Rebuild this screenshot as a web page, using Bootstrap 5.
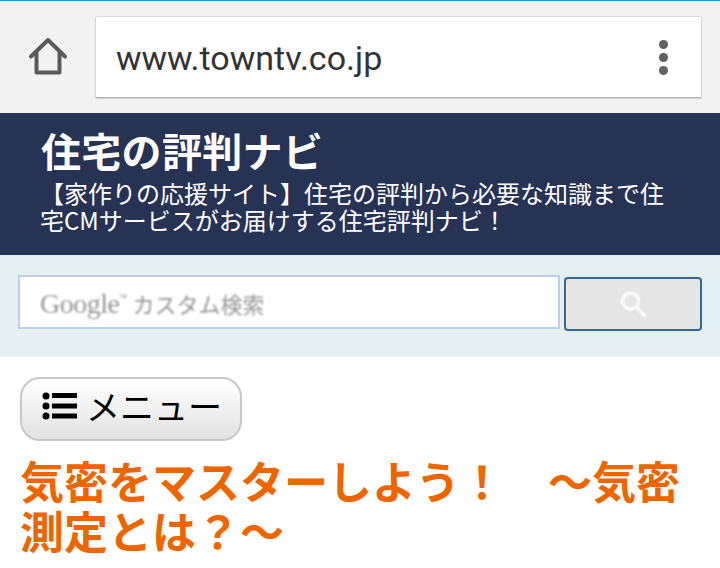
<!DOCTYPE html>
<html lang="ja">
<head>
  <meta charset="UTF-8" />
  <meta name="viewport" content="width=device-width, initial-scale=1" />
  <title>住宅の評判ナビ</title>
  <link href="https://cdn.jsdelivr.net/npm/bootstrap@5.3.0/dist/css/bootstrap.min.css" rel="stylesheet" />
  <style>
    html, body {
      height: 568px;
      overflow: hidden;
    }
    body {
      background: #fff;
      font-family: "Noto Sans CJK JP", "Liberation Sans", sans-serif;
    }
    .browser-bar {
      height: 113px;
      background: #f2f2f2;
      border-top: 1px solid #2f8fc4;
      padding: 15px 18px 0 28px;
    }
    .home-icon {
      width: 40px;
      height: 40px;
      margin-right: 27px;
      margin-top: 21px;
    }
    .url-box {
      height: 82px;
      background: #fff;
      border: 1px solid #d8d8d8;
      border-bottom: 1px solid #b4b4b4;
      border-radius: 2px;
      box-shadow: 0 1px 1px rgba(0,0,0,.15);
      padding: 3px 33px 0 20px;
      font-family: "Roboto", "Liberation Sans", sans-serif;
      font-size: 34px;
      color: #333;
    }
    .dots {
      margin-top: -3px;
    }
    .dots span {
      display: block;
      width: 9px;
      height: 9px;
      border-radius: 50%;
      background: #606060;
    }
    .site-head {
      height: 142px;
      background: #263354;
      color: #fff;
      padding: 11px 41px 0;
    }
    .site-title {
      font-size: 40px;
      font-weight: 700;
      line-height: 52px;
      letter-spacing: .3px;
      margin: 0;
    }
    .site-desc {
      font-size: 24px;
      line-height: 27px;
      margin: 3px 0 0 -1px;
      width: 640px;
    }
    .search-strip {
      height: 102px;
      background: #e5f0f3;
      padding: 20px 18px 0 18px;
    }
    .search-field {
      width: 542px;
      height: 54px;
      background: #fff;
      border: 2px solid #bdd0e8;
      padding: 3px 0 0 20px;
      font-size: 22px;
      color: #959595;
    }
    .search-field > span {
      filter: blur(.8px);
    }
    .search-logo {
      font-family: "Liberation Serif", serif;
      font-size: 28px;
      letter-spacing: -.5px;
    }
    .search-field sup {
      font-size: 10px;
      top: -1.1em;
      margin-right: 6px;
    }
    .search-go {
      width: 138px;
      height: 54px;
      margin: 2px 0 0 4px;
      background: #e6e6e6;
      border: 2px solid #336699;
      border-radius: 4px;
    }
    .page-main {
      padding: 20px 20px 0;
    }
    .menu-btn {
      width: 222px;
      height: 64px;
      border: 2px solid #c8c8c8;
      border-radius: 20px;
      background: linear-gradient(to bottom, #fff, #e2e2e2);
      color: #000;
      font-size: 34px;
      line-height: 1;
      padding: 0 0 6px 20px;
    }
    .article-title {
      margin: 14px 0 0;
      width: 680px;
      color: #ee6500;
      font-size: 44px;
      font-weight: 700;
      line-height: 50px;
    }
  </style>
</head>
<body>
  <div class="browser-bar d-flex align-items-start">
    <svg class="home-icon flex-shrink-0" viewBox="0 0 40 40" fill="none" stroke="#5a5a5a" stroke-width="4" stroke-linejoin="round" stroke-linecap="round">
      <path d="M3 19.500 20 3 37 19.500M8.500 15V35.500H31.500V15" />
    </svg>
    <div class="url-box flex-grow-1 d-flex align-items-center justify-content-between">
      <span>www.towntv.co.jp</span>
      <div class="dots d-flex flex-column gap-1">
        <span></span><span></span><span></span>
      </div>
    </div>
  </div>

  <header class="site-head">
    <h1 class="site-title">住宅の評判ナビ</h1>
    <p class="site-desc">【家作りの応援サイト】住宅の評判から必要な知識まで住宅CMサービスがお届けする住宅評判ナビ！</p>
  </header>

  <form class="search-strip d-flex align-items-start">
    <div class="search-field d-flex align-items-center"><span><span class="search-logo">Google</span><sup>™</sup>カスタム検索</span></div>
    <button type="button" class="search-go d-flex align-items-center justify-content-center p-0">
      <svg width="30" height="30" viewBox="0 0 30 30" fill="none" stroke="#f8f8f8" stroke-linecap="round">
        <circle cx="12.500" cy="12" r="8" stroke-width="4" />
        <path d="M18.500 18 26 26" stroke-width="4" />
      </svg>
    </button>
  </form>

  <main class="page-main">
    <button type="button" class="menu-btn d-flex align-items-center gap-1">
      <svg class="me-1" width="36" height="28" viewBox="0 0 36 28" fill="#000">
        <circle cx="4" cy="4" r="3.500" /><circle cx="4" cy="14" r="3.500" /><circle cx="4" cy="24" r="3.500" />
        <rect x="10" y="1" width="25" height="5" /><rect x="10" y="11.500" width="25" height="5" /><rect x="10" y="21.500" width="25" height="5" />
      </svg>
      <span>メニュー</span>
    </button>
    <h2 class="article-title">気密をマスターしよう！　～気密測定とは？～</h2>
  </main>

  <script src="https://cdn.jsdelivr.net/npm/bootstrap@5.3.0/dist/js/bootstrap.bundle.min.js"></script>
</body>
</html>
